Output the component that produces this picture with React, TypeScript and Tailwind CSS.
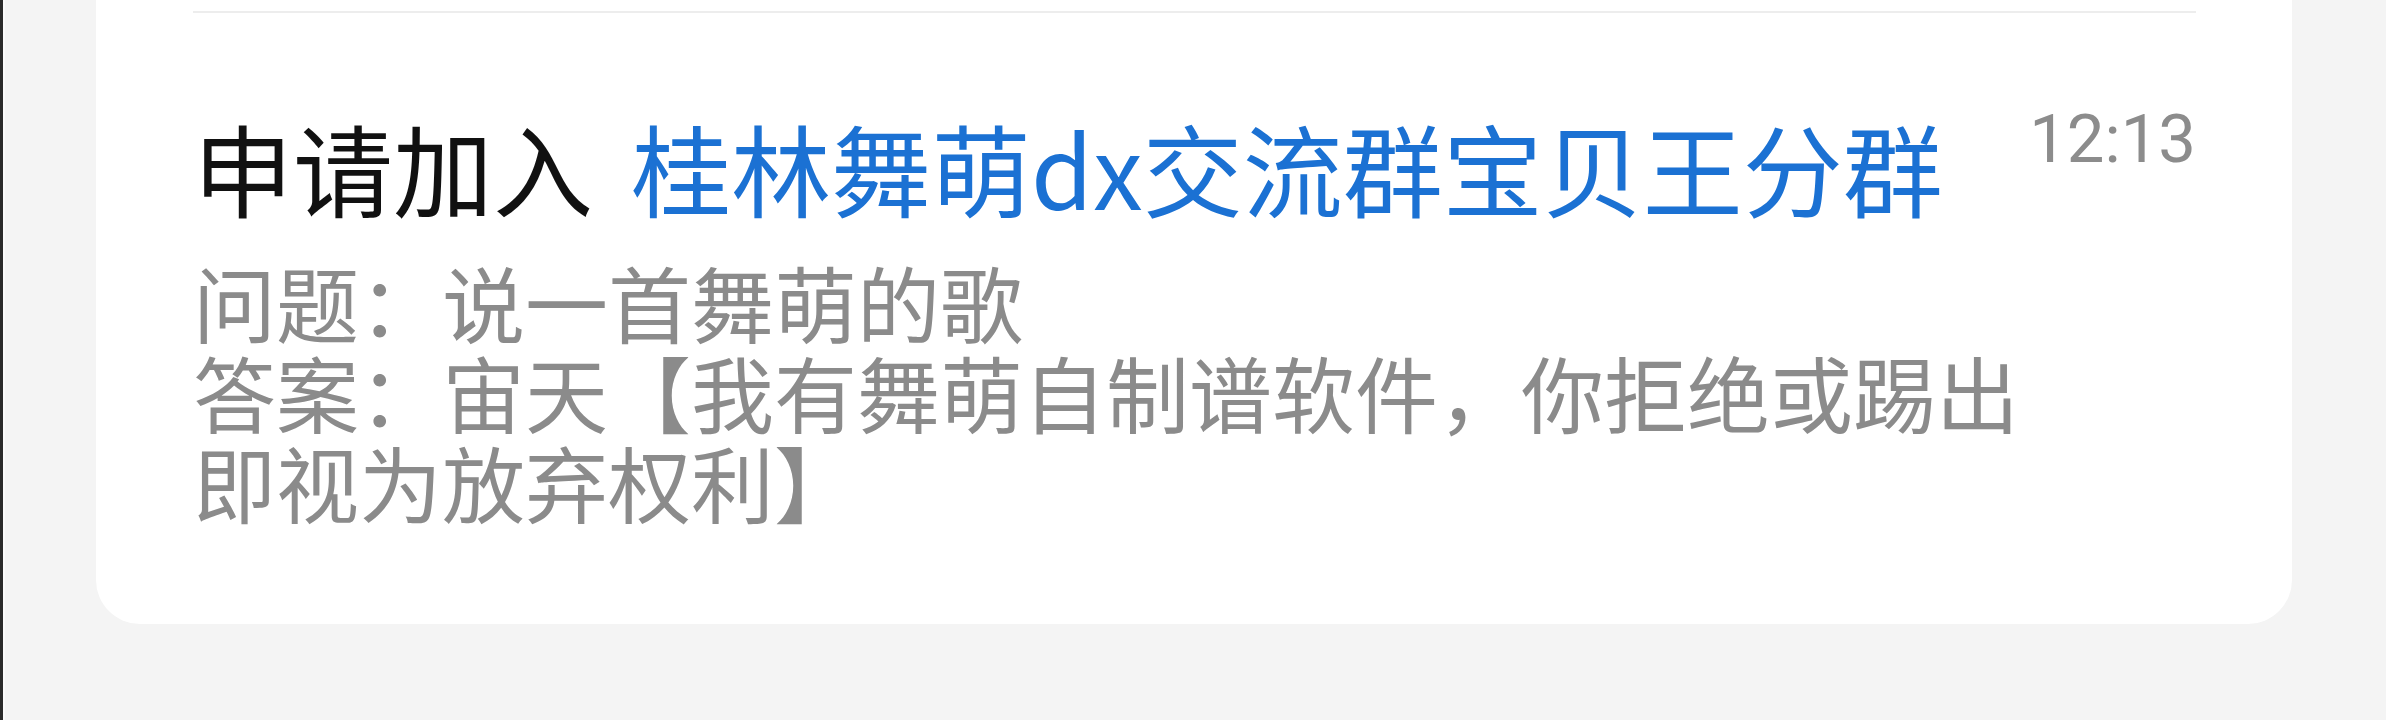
export default function App() {
  return (
    <div className="flex h-[720px] w-[2386px] overflow-hidden bg-[#f4f4f4]">
      {/* left window edge */}
      <div className="h-full w-[3px] bg-[#2a2a2a]" />
      <div className="h-full w-[2px] bg-[#fafafa]" />

      <div className="ml-[91px] h-[624px] w-[2196px] rounded-b-[44px] bg-white pt-[11px] pl-[97px] pr-[96px] pb-[98px]">
        <div className="h-[2px] w-full bg-[#ededed]" />

        <div className="mt-[93px] flex items-start justify-between">
          <div
            className="pt-[11px] text-[100px] leading-none whitespace-nowrap"
            style={{ fontFamily: '"Noto Sans CJK SC", "Noto Sans", sans-serif' }}
          >
            <span className="text-[#111111]">申请加入</span>
            <span className="ml-[38px] text-[#1b71d3]">桂林舞萌dx交流群宝贝王分群</span>
          </div>
          <span
            className="text-[67px] leading-none text-[#8c8c8c]"
            style={{ fontFamily: 'Roboto, "Noto Sans", sans-serif' }}
          >
            12:13
          </span>
        </div>

        <p
          className="mt-[39px] text-[83px] leading-[90px] text-[#8b8b8b]"
          style={{ fontFamily: '"Noto Sans CJK SC", "Noto Sans", sans-serif' }}
        >
          问题：说一首舞萌的歌
          <br />
          答案：宙天【我有舞萌自制谱软件，你拒绝或踢出
          <br />
          即视为放弃权利】
        </p>
      </div>
    </div>
  )
}
